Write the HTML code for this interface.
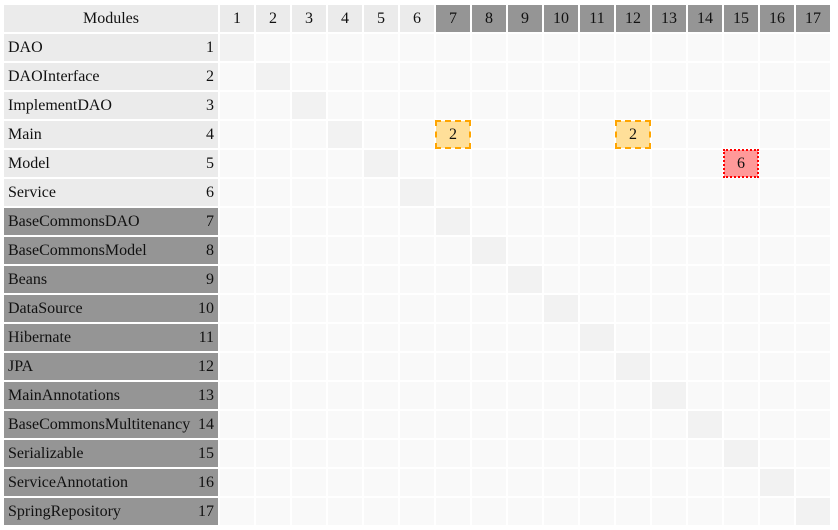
<!DOCTYPE html>
<html><head><style>
body{margin:0;background:#fff;font-family:"Liberation Serif",serif;font-size:16px;color:#111;}
table{position:absolute;left:2px;top:3px;border-spacing:2px;border-collapse:separate;font-size:16px;font-family:"Liberation Serif",serif;}
td{height:27px;padding:0;box-sizing:border-box;text-align:center;background:#f9f9f9;width:34px;}
td.m{width:214px;text-align:left;padding:0 4px;background:#ebebeb;}
td.m span{float:right;}
td.hd{text-align:center;}
tr.h td{background:#ebebeb;}
tr.h td.g,td.m.g{background:#959595;}
td.d{background:#f2f2f2;}
td.o{background:#ffdf99;outline:2px dashed #ffa500;outline-offset:-1px;}
td.r{background:#ff9999;outline:2px dotted #f00;outline-offset:-1px;}
</style></head><body>
<table>
<tr class="h"><td class="m hd">Modules</td><td>1</td><td>2</td><td>3</td><td>4</td><td>5</td><td>6</td><td class="g">7</td><td class="g">8</td><td class="g">9</td><td class="g">10</td><td class="g">11</td><td class="g">12</td><td class="g">13</td><td class="g">14</td><td class="g">15</td><td class="g">16</td><td class="g">17</td></tr>
<tr><td class="m">DAO<span>1</span></td><td class="d"></td><td></td><td></td><td></td><td></td><td></td><td></td><td></td><td></td><td></td><td></td><td></td><td></td><td></td><td></td><td></td><td></td></tr>
<tr><td class="m">DAOInterface<span>2</span></td><td></td><td class="d"></td><td></td><td></td><td></td><td></td><td></td><td></td><td></td><td></td><td></td><td></td><td></td><td></td><td></td><td></td><td></td></tr>
<tr><td class="m">ImplementDAO<span>3</span></td><td></td><td></td><td class="d"></td><td></td><td></td><td></td><td></td><td></td><td></td><td></td><td></td><td></td><td></td><td></td><td></td><td></td><td></td></tr>
<tr><td class="m">Main<span>4</span></td><td></td><td></td><td></td><td class="d"></td><td></td><td></td><td class="o">2</td><td></td><td></td><td></td><td></td><td class="o">2</td><td></td><td></td><td></td><td></td><td></td></tr>
<tr><td class="m">Model<span>5</span></td><td></td><td></td><td></td><td></td><td class="d"></td><td></td><td></td><td></td><td></td><td></td><td></td><td></td><td></td><td></td><td class="r">6</td><td></td><td></td></tr>
<tr><td class="m">Service<span>6</span></td><td></td><td></td><td></td><td></td><td></td><td class="d"></td><td></td><td></td><td></td><td></td><td></td><td></td><td></td><td></td><td></td><td></td><td></td></tr>
<tr><td class="m g">BaseCommonsDAO<span>7</span></td><td></td><td></td><td></td><td></td><td></td><td></td><td class="d"></td><td></td><td></td><td></td><td></td><td></td><td></td><td></td><td></td><td></td><td></td></tr>
<tr><td class="m g">BaseCommonsModel<span>8</span></td><td></td><td></td><td></td><td></td><td></td><td></td><td></td><td class="d"></td><td></td><td></td><td></td><td></td><td></td><td></td><td></td><td></td><td></td></tr>
<tr><td class="m g">Beans<span>9</span></td><td></td><td></td><td></td><td></td><td></td><td></td><td></td><td></td><td class="d"></td><td></td><td></td><td></td><td></td><td></td><td></td><td></td><td></td></tr>
<tr><td class="m g">DataSource<span>10</span></td><td></td><td></td><td></td><td></td><td></td><td></td><td></td><td></td><td></td><td class="d"></td><td></td><td></td><td></td><td></td><td></td><td></td><td></td></tr>
<tr><td class="m g">Hibernate<span>11</span></td><td></td><td></td><td></td><td></td><td></td><td></td><td></td><td></td><td></td><td></td><td class="d"></td><td></td><td></td><td></td><td></td><td></td><td></td></tr>
<tr><td class="m g">JPA<span>12</span></td><td></td><td></td><td></td><td></td><td></td><td></td><td></td><td></td><td></td><td></td><td></td><td class="d"></td><td></td><td></td><td></td><td></td><td></td></tr>
<tr><td class="m g">MainAnnotations<span>13</span></td><td></td><td></td><td></td><td></td><td></td><td></td><td></td><td></td><td></td><td></td><td></td><td></td><td class="d"></td><td></td><td></td><td></td><td></td></tr>
<tr><td class="m g">BaseCommonsMultitenancy<span>14</span></td><td></td><td></td><td></td><td></td><td></td><td></td><td></td><td></td><td></td><td></td><td></td><td></td><td></td><td class="d"></td><td></td><td></td><td></td></tr>
<tr><td class="m g">Serializable<span>15</span></td><td></td><td></td><td></td><td></td><td></td><td></td><td></td><td></td><td></td><td></td><td></td><td></td><td></td><td></td><td class="d"></td><td></td><td></td></tr>
<tr><td class="m g">ServiceAnnotation<span>16</span></td><td></td><td></td><td></td><td></td><td></td><td></td><td></td><td></td><td></td><td></td><td></td><td></td><td></td><td></td><td></td><td class="d"></td><td></td></tr>
<tr><td class="m g">SpringRepository<span>17</span></td><td></td><td></td><td></td><td></td><td></td><td></td><td></td><td></td><td></td><td></td><td></td><td></td><td></td><td></td><td></td><td></td><td class="d"></td></tr>
</table>
</body></html>
